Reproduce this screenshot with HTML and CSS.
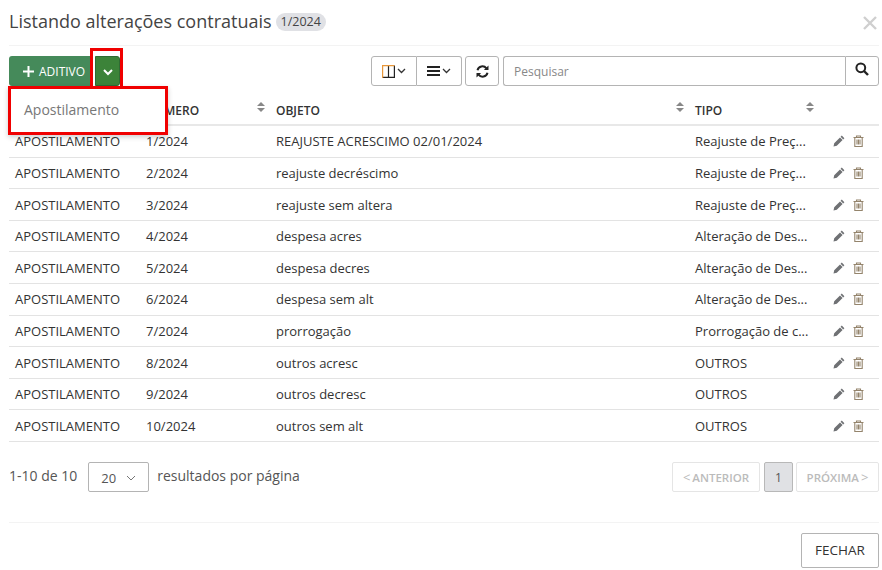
FILE: index.html
```html
<!DOCTYPE html>
<html lang="en">

<head>
    <meta charset="UTF-8">
    <title>Listando alterações contratuais</title>
    <link rel="stylesheet" href="styles.css">
</head>

<body>
    <!-- Modal header -->
    <div class="modal-header">
        <h4 class="modal-title">Listando alterações contratuais</h4>
        <span class="badge">1/2024</span>
        <svg class="close-icon" width="14" height="14" viewBox="0 0 14 14"><path d="M1 1l12 12M13 1L1 13" /></svg>
    </div>

    <!-- Toolbar -->
    <div class="toolbar">
        <div class="add-group">
            <button class="btn-add">
                <svg width="11" height="11" viewBox="0 0 11 11"><path d="M5.5 0v11M0 5.5h11" /></svg>
                ADITIVO
            </button>
            <button class="btn-caret">
                <svg width="10" height="7" viewBox="0 0 10 7"><path d="M1 1l4 4 4-4" /></svg>
            </button>
            <span class="mark mark-caret"></span>
            <div class="add-menu">Apostilamento</div>
        </div>

        <div class="tools">
            <div class="btn-group">
                <button class="tool-btn tool-wide">
                    <svg width="13" height="13" viewBox="0 0 13 13"><path d="M0.6 12.4h11.8V0.6M6.5 1v11" fill="none" stroke="#222" stroke-width="1.2" /><path d="M0.6 13V0.6H12.4" fill="none" stroke="#e8973a" stroke-width="1.2" /></svg>
                    <svg class="small-caret" width="9" height="6" viewBox="0 0 9 6"><path d="M1 1l3.5 3.5L8 1" /></svg>
                </button>
                <button class="tool-btn tool-wide">
                    <svg width="13" height="10" viewBox="0 0 13 10"><path d="M0 1h13M0 5h13M0 9h13" stroke="#222" stroke-width="2" /></svg>
                    <svg class="small-caret" width="9" height="6" viewBox="0 0 9 6"><path d="M1 1l3.5 3.5L8 1" /></svg>
                </button>
            </div>
            <button class="tool-btn tool-single">
                <svg width="13" height="13" viewBox="0 0 13 13"><path d="M1.5 5.2A5 5 0 0 1 10.4 3.4M11.5 7.8A5 5 0 0 1 2.6 9.6" fill="none" stroke="#222" stroke-width="2" /><path d="M12.5 0.5v4.6H7.9zM0.5 12.5V7.9h4.6z" fill="#222" /></svg>
            </button>
            <div class="search">
                <div class="search-input">Pesquisar</div>
                <button class="search-btn">
                    <svg width="14" height="14" viewBox="0 0 14 14"><circle cx="5.8" cy="5.8" r="4.4" fill="none" stroke="#222" stroke-width="2" /><path d="M9 9l4 4" stroke="#222" stroke-width="2.4" /></svg>
                </button>
            </div>
        </div>
    </div>

    <!-- List of contract changes -->
    <table class="list">
        <colgroup>
            <col class="col-type">
            <col class="col-number">
            <col class="col-object">
            <col class="col-kind">
            <col class="col-actions">
        </colgroup>
        <thead>
            <tr>
                <th></th>
                <th><div class="th-inner">NÚMERO<span class="sort"></span></div></th>
                <th><div class="th-inner">OBJETO<span class="sort"></span></div></th>
                <th><div class="th-inner">TIPO<span class="sort sort-kind"></span></div></th>
                <th></th>
            </tr>
        </thead>
        <tbody id="rows"></tbody>
    </table>

    <!-- Pagination -->
    <div class="pager">
        <div class="pager-left">
            <span class="pager-text">1-10 de 10</span>
            <div class="page-size">20
                <svg width="10" height="6" viewBox="0 0 10 6"><path d="M1 1l4 4 4-4" /></svg>
            </div>
            <span class="pager-text">resultados por página</span>
        </div>
        <div class="pager-right">
            <button class="page-btn page-prev"><span class="angle">&lt;</span>ANTERIOR</button>
            <button class="page-num">1</button>
            <button class="page-btn page-next">PRÓXIMA<span class="angle">&gt;</span></button>
        </div>
    </div>

    <!-- Modal footer -->
    <div class="modal-footer">
        <button class="btn-close">FECHAR</button>
    </div>

    <script>
        // Long types are shown cut, as the list column shows them
        var rows = [
            ["1/2024", "REAJUSTE ACRESCIMO 02/01/2024", "Reajuste de Preç..."],
            ["2/2024", "reajuste decréscimo", "Reajuste de Preç..."],
            ["3/2024", "reajuste sem altera", "Reajuste de Preç..."],
            ["4/2024", "despesa acres", "Alteração de Des..."],
            ["5/2024", "despesa decres", "Alteração de Des..."],
            ["6/2024", "despesa sem alt", "Alteração de Des..."],
            ["7/2024", "prorrogação", "Prorrogação de c..."],
            ["8/2024", "outros acresc", "OUTROS"],
            ["9/2024", "outros decresc", "OUTROS"],
            ["10/2024", "outros sem alt", "OUTROS"]
        ];

        var pencil = '<svg width="12" height="12" viewBox="0 0 12 12"><path d="M8.8 0.6l2.6 2.6-1.2 1.2-2.6-2.6zM7 2.4l2.6 2.6-5.8 5.8-3.3 0.7 0.7-3.3z" fill="#6f7174" /></svg>';
        var trash = '<svg width="11" height="12" viewBox="0 0 11 12"><path d="M0.5 2.5h10M3.5 2.5V1h4v1.5M1.8 2.5v9h7.4v-9M4 4.5v5M5.5 4.5v5M7 4.5v5" fill="none" stroke="#94846c" stroke-width="1.1" /></svg>';

        var body = document.getElementById('rows');
        rows.forEach(function (row) {
            var tr = document.createElement('tr');
            tr.innerHTML = '<td>APOSTILAMENTO</td><td>' + row[0] + '</td><td>' + row[1] + '</td>' +
                '<td>' + row[2] + '</td>' +
                '<td><div class="actions">' + pencil + trash + '</div></td>';
            body.appendChild(tr);
        });
    </script>
</body>

</html>
```

FILE: styles.css
```css
/* Page */
body {
    margin: 0;
    padding: 0 3px 0 9px;
    background-color: #ffffff;
    color: #333333;
    font-family: "Open Sans", "Liberation Sans", sans-serif;
    font-size: 13px;
    overflow: hidden;
}

button {
    font-family: inherit;
    cursor: pointer;
}

/* Header */
.modal-header {
    display: flex;
    align-items: center;
    height: 45px;
    border-bottom: 1px solid #f3f3f3;
    box-sizing: content-box;
}

.modal-title {
    margin: 0;
    font-size: 18px;
    font-weight: 400;
    color: #444444;
    padding-bottom: 3px;
}

.badge {
    margin-left: 4px;
    padding: 0 5px;
    height: 18px;
    line-height: 18px;
    border-radius: 9px;
    background-color: #e0e1e5;
    color: #444444;
    font-size: 12.5px;
    margin-bottom: 1px;
}

.close-icon {
    margin-left: auto;
    margin-right: 2px;
    fill: none;
    stroke: #cfcfcf;
    stroke-width: 2.4;
}

/* Toolbar */
.toolbar {
    display: flex;
    justify-content: space-between;
    margin-top: 10px;
    height: 30px;
}

.add-group {
    position: relative;
    display: flex;
    gap: 5px;
}

.btn-add {
    display: flex;
    align-items: center;
    gap: 5px;
    width: 81px;
    height: 30px;
    padding: 0 0 0 14px;
    border: 0;
    border-radius: 3px 0 0 3px;
    background-color: #458a5a;
    color: #ffffff;
    font-size: 12px;
}

.btn-add svg {
    stroke: #ffffff;
    stroke-width: 2;
}

.btn-caret {
    width: 25px;
    height: 30px;
    padding: 0;
    border: 1px solid #2f6b33;
    border-radius: 0 3px 3px 0;
    background-color: #3c8339;
}

.btn-caret svg {
    fill: none;
    stroke: #ffffff;
    stroke-width: 2;
}

/* Red marks drawn over the screenshot */
.mark-caret {
    position: absolute;
    left: 81px;
    top: -8px;
    width: 33px;
    height: 38px;
    box-sizing: border-box;
    border: 3px solid #f00000;
    border-bottom: 0;
    pointer-events: none;
}

.add-menu {
    position: absolute;
    left: -1px;
    top: 30px;
    z-index: 2;
    width: 160px;
    height: 49px;
    box-sizing: border-box;
    border: 3px solid #f00000;
    background-color: #ffffff;
    box-shadow: 0 2px 5px rgba(0, 0, 0, 0.2);
    padding-left: 13px;
    line-height: 42px;
    color: #777777;
    font-size: 14px;
}

.tools {
    display: flex;
    gap: 4px;
}

.btn-group {
    display: flex;
    margin-right: -1px;
}

.tool-btn {
    display: flex;
    align-items: center;
    justify-content: center;
    height: 30px;
    padding: 0;
    border: 1px solid #b4b4b4;
    background-color: #ffffff;
    border-radius: 3px;
}

.tool-wide {
    width: 46px;
    gap: 2px;
}

.tool-wide:first-child {
    border-radius: 3px 0 0 3px;
}

.tool-wide:last-child {
    width: 45px;
    border-left: 0;
    border-radius: 0 3px 3px 0;
}

.tool-single {
    width: 34px;
}

.small-caret {
    fill: none;
    stroke: #333333;
    stroke-width: 1.3;
}

.search {
    display: flex;
    width: 376px;
}

.search-input {
    flex: 1;
    border: 1px solid #b4b4b4;
    border-right: 0;
    border-radius: 3px 0 0 3px;
    padding-left: 10px;
    line-height: 30px;
    color: #888888;
    font-size: 12px;
}

.search-btn {
    width: 34px;
    height: 30px;
    padding: 0;
    border: 1px solid #b4b4b4;
    border-radius: 0 3px 3px 0;
    background-color: #ffffff;
}

/* Table */
.list {
    width: 870px;
    margin-top: 9.1px;
    border-collapse: collapse;
    table-layout: fixed;
}

.col-type { width: 131px; }
.col-number { width: 130px; }
.col-object { width: 419px; }
.col-kind { width: 128px; }
.col-actions { width: 62px; }

.list th {
    height: 29px;
    padding: 0 6px;
    border-bottom: 2px solid #e8e8e8;
    text-align: left;
    font-size: 12px;
    font-weight: 600;
    color: #333333;
}

.th-inner {
    position: relative;
    padding-top: 1px;
}

.sort {
    position: absolute;
    right: -1px;
    top: 1px;
    width: 8px;
    height: 11px;
}

.sort-kind {
    right: -3px;
}

.sort::before,
.sort::after {
    content: "";
    position: absolute;
    left: 0;
    border-left: 4px solid transparent;
    border-right: 4px solid transparent;
}

.sort::before {
    top: 0;
    border-bottom: 4px solid #888888;
}

.sort::after {
    top: 6px;
    border-top: 4px solid #888888;
}

.list td {
    height: 30.6px;
    padding: 0 6px;
    border-bottom: 1px solid #e3e3e3;
    white-space: nowrap;
}

.actions {
    display: flex;
    justify-content: flex-end;
    align-items: center;
    gap: 8px;
    padding-right: 9px;
}

/* Pagination */
.pager {
    display: flex;
    justify-content: space-between;
    align-items: center;
    height: 30px;
    margin-top: 20.4px;
}

.pager-left {
    display: flex;
    align-items: center;
    gap: 8px;
    font-size: 14px;
    color: #555555;
}

.pager-text {
    padding-bottom: 3px;
}

.page-size {
    display: flex;
    align-items: center;
    justify-content: space-between;
    box-sizing: border-box;
    width: 61px;
    height: 30px;
    margin-left: 3px;
    padding: 2px 12px 0 12px;
    border: 1px solid #b4b4b4;
    border-radius: 2px;
    font-size: 13px;
}

.page-size svg {
    fill: none;
    stroke: #777777;
    stroke-width: 1;
}

.pager-right {
    display: flex;
    gap: 3px;
}

.page-btn {
    display: flex;
    align-items: center;
    justify-content: center;
    gap: 2px;
    height: 30px;
    padding: 0;
    border: 1px solid #e5e5e5;
    border-radius: 2px;
    background-color: #ffffff;
    color: #bbbbbb;
    font-size: 11.5px;
    font-weight: 600;
    cursor: default;
}

.page-prev { width: 88px; }
.page-next { width: 83px; }

.angle {
    font-size: 13px;
    font-weight: 400;
}

.page-num {
    width: 29px;
    height: 30px;
    padding: 0;
    margin: 0 0 0 1px;
    border: 1px solid #b8b8b8;
    border-radius: 2px;
    background-color: #e0e1e4;
    color: #555555;
    font-size: 12px;
}

/* Footer */
.modal-footer {
    display: flex;
    justify-content: flex-end;
    margin-top: 30px;
    padding-top: 10px;
    border-top: 1px solid #f3f3f3;
}

.btn-close {
    width: 78px;
    height: 35px;
    padding: 0 0 2px;
    border: 1px solid #b4b4b4;
    border-radius: 2px;
    background-color: #ffffff;
    color: #333333;
    font-size: 13.5px;
}
```
